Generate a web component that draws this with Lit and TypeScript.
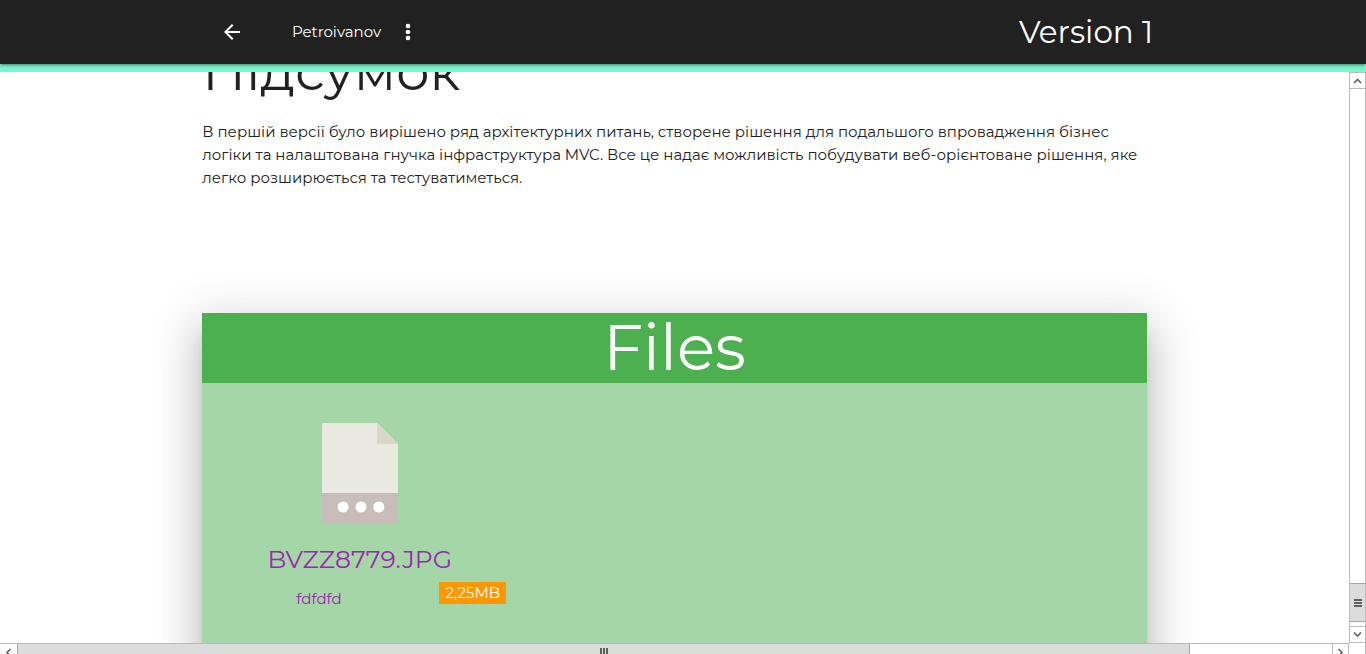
import { LitElement, html, css } from "lit";
import { customElement, property } from "lit/decorators.js";

@customElement("scroll-bar")
class ScrollBar extends LitElement {
  @property({ reflect: true }) orientation: "vertical" | "horizontal" = "vertical";

  static styles = css`
    :host {
      display: flex;
      box-sizing: border-box;
      overflow: hidden;
      background: #fff;
      border: 1px solid #bbb;
    }
    :host([orientation="vertical"]) {
      flex-direction: column;
    }
    :host([orientation="horizontal"]) {
      height: 17px;
      border-width: 1px 0 0;
    }
    button {
      flex: none;
      display: flex;
      align-items: center;
      justify-content: center;
      box-sizing: border-box;
      width: 15px;
      height: 16px;
      padding: 0;
      border: 0 solid #bbb;
      background: #fff;
    }
    :host([orientation="vertical"]) .back {
      border-bottom-width: 1px;
    }
    :host([orientation="vertical"]) .forward {
      border-top-width: 1px;
    }
    :host([orientation="horizontal"]) button {
      width: 17px;
    }
    :host([orientation="horizontal"]) .forward {
      border-width: 0 1px;
    }
    svg {
      display: block;
      fill: none;
      stroke: #606060;
      stroke-width: 2;
    }
    .chevron {
      stroke-width: 1.6;
    }
    .before {
      flex: 494;
    }
    .after {
      flex: 4;
    }
    .thumb {
      flex: 37;
      display: flex;
      align-items: center;
      justify-content: center;
      border: 0 solid #a6a6a6;
      background: #dcdcdc;
    }
    :host([orientation="vertical"]) .thumb {
      border-width: 1px 0;
    }
    :host([orientation="horizontal"]) .before {
      flex: 0;
    }
    :host([orientation="horizontal"]) .thumb {
      flex: 1171;
      border-width: 0 1px;
    }
    :host([orientation="horizontal"]) .after {
      flex: 142;
    }
  `;

  render() {
    const vertical = this.orientation === "vertical";
    return html`
      <button class="back" aria-label="Scroll back">
        <svg class="chevron" width="9" height="9" viewBox="0 0 9 9">
          <path d=${vertical ? "M1 7 4.5 3.5 8 7" : "M6.5 1 3 4.5 6.5 8"} />
        </svg>
      </button>
      <div class="before"></div>
      <div class="thumb">
        <svg width="8" height="8" viewBox="0 0 8 8">
          <path d=${vertical ? "M0 1H8M0 4H8M0 7H8" : "M1 0V8M4 0V8M7 0V8"} />
        </svg>
      </div>
      <div class="after"></div>
      <button class="forward" aria-label="Scroll forward">
        <svg class="chevron" width="9" height="9" viewBox="0 0 9 9">
          <path d=${vertical ? "M1 2.5 4.5 6 8 2.5" : "M2.5 1 6 4.5 2.5 8"} />
        </svg>
      </button>
    `;
  }
}

@customElement("file-item")
class FileItem extends LitElement {
  @property() name = "";
  @property() note = "";
  @property() size = "";

  static styles = css`
    :host {
      display: block;
      box-sizing: border-box;
      padding: 40px 11px;
      text-align: center;
    }
    .icon {
      display: block;
      margin: 0 auto 19px;
    }
    .name {
      display: block;
      color: #9c27b0;
      font-size: 25px;
      line-height: 32px;
      text-decoration: none;
    }
    .meta {
      display: flex;
      align-items: flex-start;
      justify-content: space-between;
      margin-top: 7px;
      line-height: 22px;
    }
    .note {
      padding: 6px 0 0 83px;
      color: #9c27b0;
      text-decoration: none;
    }
    .size {
      padding: 0 6px;
      background: #ff9800;
      color: #fff;
    }
  `;

  render() {
    return html`
      <svg class="icon" width="76" height="101" viewBox="0 0 76 101" aria-hidden="true">
        <path fill="#e9e9e0" d="M2 0H55L76 21V70H0V2Q0 0 2 0Z" />
        <path fill="#d9d7ca" d="M55 0V21H76Z" />
        <path fill="#c8bdb8" d="M0 70H76V99Q76 101 74 101H2Q0 101 0 99Z" />
        <g fill="#fff">
          <circle cx="21.1" cy="84" r="5.5" />
          <circle cx="39" cy="84" r="5.5" />
          <circle cx="56.8" cy="84" r="5.5" />
        </g>
      </svg>
      <a class="name" href="#">${this.name}</a>
      <div class="meta">
        <a class="note" href="#">${this.note}</a>
        <span class="size">${this.size}</span>
      </div>
    `;
  }
}

@customElement("app-root")
class AppRoot extends LitElement {
  static styles = css`
    :host {
      display: flex;
      flex-direction: column;
      height: 100vh;
      overflow: hidden;
      background: #7af7cb;
      color: #212121;
      font-family: Montserrat, Inter, "Noto Sans", sans-serif;
      font-size: 15px;
      font-weight: 400;
      line-height: 22px;
    }
    header {
      flex: none;
      background: #212121;
      color: #fff;
      box-shadow: 0 2px 2px 0 rgba(0, 0, 0, 0.14), 0 3px 1px -2px rgba(0, 0, 0, 0.12),
        0 1px 5px 0 rgba(0, 0, 0, 0.2);
    }
    nav {
      display: flex;
      align-items: center;
      width: 70%;
      height: 64px;
      margin: 0 auto;
    }
    .back {
      display: flex;
      padding: 0 15px;
    }
    .user {
      display: flex;
      align-items: center;
      gap: 15px;
      margin-left: 33px;
      padding: 0;
      border: 0;
      background: none;
      color: inherit;
      font: inherit;
      line-height: 24px;
    }
    nav svg {
      display: block;
      fill: #fff;
    }
    .brand {
      margin-left: auto;
      padding-right: 8px;
      color: inherit;
      font-size: 31px;
      line-height: 64px;
      text-decoration: none;
    }
    .frame {
      flex: 1;
      min-height: 0;
      display: grid;
      grid-template: minmax(0, 1fr) 11px / minmax(0, 1fr) 17px;
      margin-top: 8px;
      background: #fff;
    }
    .view {
      overflow: hidden;
    }
    article {
      width: 70%;
      margin: -30px auto 0;
    }
    h1,
    h2 {
      margin: 0;
      font-weight: 400;
    }
    h1 {
      font-size: 53px;
      line-height: 58px;
    }
    h2 {
      font-size: 63px;
      line-height: 70px;
    }
    p {
      margin: 20px 0 124px;
      line-height: 23px;
    }
    .card {
      min-height: 480px;
      background: #a5d6a7;
      box-shadow: 0 24px 38px 3px rgba(0, 0, 0, 0.14), 0 9px 46px 8px rgba(0, 0, 0, 0.12),
        0 11px 15px -7px rgba(0, 0, 0, 0.2);
    }
    .card h2 {
      background: #4caf50;
      color: #fff;
      text-align: center;
    }
    .files {
      display: grid;
      grid-template-columns: repeat(3, minmax(0, 1fr));
    }
    .corner {
      border: 1px solid #bbb;
      border-width: 0 1px 0 0;
    }
  `;

  render() {
    return html`
      <header>
        <nav>
          <a class="back" href="#" aria-label="Back">
            <svg width="24" height="24" viewBox="0 0 24 24">
              <path d="M20 11H7.83l5.59-5.59L12 4l-8 8 8 8 1.41-1.41L7.83 13H20v-2z" />
            </svg>
          </a>
          <button class="user">
            Petroivanov
            <svg width="24" height="24" viewBox="0 0 24 24" aria-hidden="true">
              <circle cx="12" cy="6" r="2.3" />
              <circle cx="12" cy="12" r="2.3" />
              <circle cx="12" cy="18" r="2.3" />
            </svg>
          </button>
          <a class="brand" href="#">Version 1</a>
        </nav>
      </header>
      <div class="frame">
        <main class="view">
          <article>
            <h1>Підсумок</h1>
            <p>
              В першій версії було вирішено ряд архітектурних питань, створене рішення для подальшого
              впровадження бізнес логіки та налаштована гнучка інфраструктура MVC. Все це надає
              можливість побудувати веб-орієнтоване рішення, яке легко розширюється та тестуватиметься.
            </p>
            <section class="card">
              <h2>Files</h2>
              <div class="files">
                <file-item name="BVZZ8779.JPG" note="fdfdfd" size="2,25MB"></file-item>
              </div>
            </section>
          </article>
        </main>
        <scroll-bar orientation="vertical"></scroll-bar>
        <scroll-bar orientation="horizontal"></scroll-bar>
        <div class="corner"></div>
      </div>
    `;
  }
}
